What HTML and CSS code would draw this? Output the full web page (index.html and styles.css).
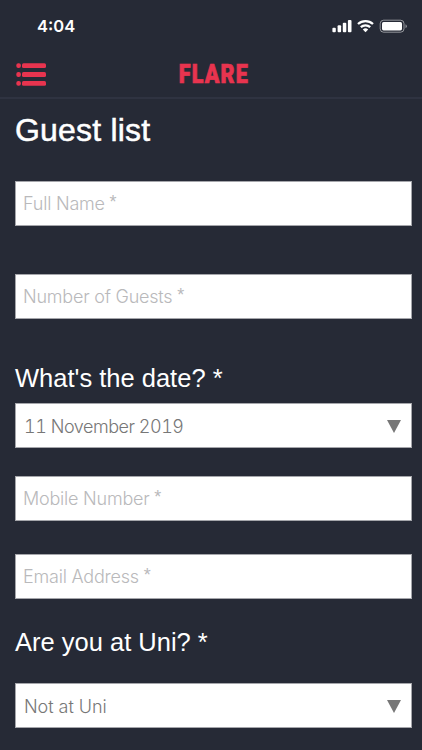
FILE: index.html
```html
<!DOCTYPE html>
<html lang="en">
<head>
<meta charset="utf-8">
<title>Guest list</title>
<link rel="stylesheet" href="styles.css">
</head>
<body>
<div class="status">
  <span class="time">4:04</span>
  <svg class="indicators" width="76" height="16" viewBox="0 0 76 16">
    <g fill="#fff">
      <rect x="0.4" y="8.7" width="3.4" height="4.6" rx="1"/>
      <rect x="5.6" y="6.3" width="3.5" height="7" rx="1"/>
      <rect x="10.8" y="3.7" width="3.5" height="9.6" rx="1"/>
      <rect x="15.9" y="1" width="3.6" height="12.3" rx="1"/>
      <path d="M33.5 13.3l-2.7-2.8a4 4 0 0 1 5.4 0z"/>
      <rect x="50" y="3" width="20" height="8.4" rx="1.6"/>
      <path d="M73.5 5.3v4q1.3-.5 1.3-2t-1.3-2z" opacity=".5"/>
    </g>
    <g fill="none" stroke="#fff">
      <path d="M26 5a11.1 11.1 0 0 1 15 0M28.8 8.1a7 7 0 0 1 9.4 0" stroke-width="2.3"/>
      <rect x="48.2" y="1.2" width="23.8" height="12" rx="3.4" stroke-width="1" opacity=".5"/>
    </g>
  </svg>
</div>
<header class="bar">
  <svg class="menu" width="30" height="23" viewBox="0 0 30 23" fill="#e8344f">
    <rect x="0.3" y="0.3" width="4.6" height="4.8" rx="2"/><rect x="6" y="0.3" width="24" height="4.8" rx="1.5"/>
    <rect x="0.3" y="9.1" width="4.6" height="4.8" rx="2"/><rect x="6" y="9.1" width="24" height="4.8" rx="1.5"/>
    <rect x="0.3" y="17.9" width="4.6" height="4.8" rx="2"/><rect x="6" y="17.9" width="24" height="4.8" rx="1.5"/>
  </svg>
  <span class="brand">FLARE</span>
</header>
<main class="form">
  <h1 class="title">Guest list</h1>
  <div class="field name"><span class="hint">Full Name <span class="star">*</span></span></div>
  <div class="field guests"><span class="hint">Number of Guests <span class="star">*</span></span></div>
  <h2 class="question date-q">What's the date? *</h2>
  <div class="field select date"><span class="value">11 November 2019</span><span class="arrow"></span></div>
  <div class="field mobile"><span class="hint">Mobile Number <span class="star">*</span></span></div>
  <div class="field email"><span class="hint">Email Address <span class="star">*</span></span></div>
  <h2 class="question uni-q">Are you at Uni? *</h2>
  <div class="field select uni"><span class="value">Not at Uni</span><span class="arrow"></span></div>
</main>
</body>
</html>
```
FILE: styles.css
```css
* { box-sizing: border-box; }
body {
  margin: 0;
  width: 422px;
  height: 750px;
  overflow: hidden;
  background: #262a36;
  color: #fff;
  font-family: "Liberation Sans", sans-serif;
}
.status {
  height: 50px;
  padding: 16px 14px 0 37px;
  display: flex;
  justify-content: space-between;
  align-items: flex-start;
}
.time { font: 600 16.5px/20px Inter, sans-serif; }
.indicators { margin: 3px 0 0; }
.bar {
  height: 49px;
  display: grid;
  grid-template-columns: 1fr auto 1fr;
  border-bottom: 2px solid #2f3341;
}
.menu { margin: 13px 0 0 16px; }
.brand {
  font: 900 25px/50px Roboto, sans-serif;
  letter-spacing: 1.4px;
  color: #e8344f;
  transform: translateX(3px) scaleX(0.86);
  -webkit-text-stroke: 0.7px #e8344f;
}
.form { padding: 0 10px 0 15px; }
.title {
  margin: 12px 0 32px;
  font-size: 32px;
  line-height: 38px;
  font-weight: 400;
  letter-spacing: 0.2px;
  -webkit-text-stroke: 0.5px #fff;
}
.question {
  margin: 0;
  font-size: 25.5px;
  line-height: 30px;
  font-weight: 400;
}
.field {
  height: 45px;
  border: 1px solid #a5a6ab;
  background: #fff;
  padding: 0 10px 0 7px;
  display: flex;
  align-items: center;
  justify-content: space-between;
  font: 300 18px/22px Inter, sans-serif;
  letter-spacing: -0.22px;
  white-space: nowrap;
}
.hint { color: #b9b9bb; }
.star {
  font: 400 18px/16px "Liberation Sans", sans-serif;
  vertical-align: 2px;
}
.value { color: #777; letter-spacing: -0.05px; padding-top: 1px; }
.select { padding: 1px 10px 0 8px; }
.date .value { font-feature-settings: "tnum"; letter-spacing: -0.47px; }
.arrow {
  border: solid transparent;
  border-width: 13px 7.5px 0;
  border-top-color: #777;
}
.guests { margin-top: 48px; }
.date-q { margin-top: 44px; }
.date { margin-top: 10px; }
.mobile { margin-top: 28px; }
.email { margin-top: 33px; }
.uni-q { margin-top: 28px; }
.uni { margin-top: 26px; }
```
